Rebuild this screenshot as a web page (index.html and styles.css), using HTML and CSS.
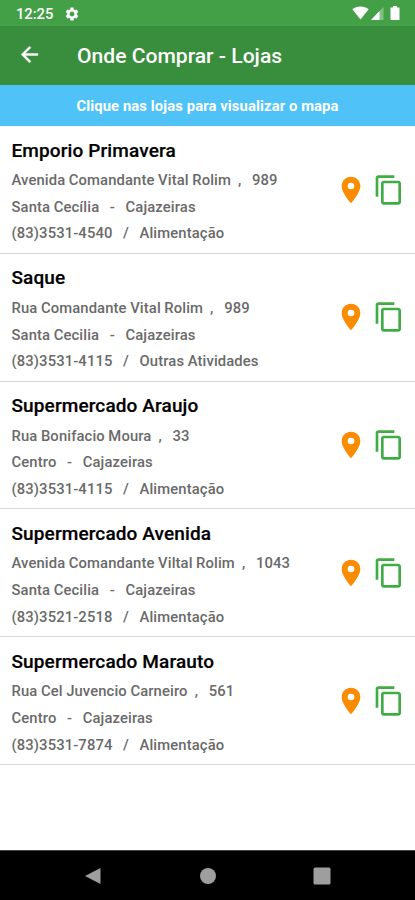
FILE: index.html
```html
<!DOCTYPE html>
<html lang="pt-BR">
<head>
<meta charset="utf-8">
<title>Onde Comprar - Lojas</title>
<link rel="stylesheet" href="styles.css">
</head>
<body>
<svg class="defs" width="0" height="0">
  <symbol id="pin" viewBox="0 0 24 24"><path d="M12 2C8.13 2 5 5.13 5 9c0 5.25 7 13 7 13s7-7.75 7-13c0-3.87-3.13-7-7-7zm0 9.5a2.5 2.5 0 0 1 0-5 2.5 2.5 0 0 1 0 5z"/></symbol>
  <symbol id="copy" viewBox="0 0 24 24"><path d="M16 1H4c-1.1 0-2 .9-2 2v14h2V3h12V1zm3 4H8c-1.1 0-2 .9-2 2v14c0 1.1.9 2 2 2h11c1.1 0 2-.9 2-2V7c0-1.1-.9-2-2-2zm0 16H8V7h11v14z"/></symbol>
</svg>
<div class="status">
  <span class="time">12:25</span>
  <svg class="gear" viewBox="0 0 24 24"><path d="M19.14 12.94c.04-.3.06-.61.06-.94 0-.32-.02-.64-.07-.94l2.03-1.58c.18-.14.23-.41.12-.61l-1.92-3.32c-.12-.22-.37-.29-.59-.22l-2.39.96c-.5-.38-1.03-.7-1.62-.94l-.36-2.54c-.04-.24-.24-.41-.48-.41h-3.84c-.24 0-.43.17-.47.41l-.36 2.54c-.59.24-1.13.57-1.62.94l-2.39-.96c-.22-.08-.47 0-.59.22L2.74 8.87c-.12.21-.08.47.12.61l2.03 1.58c-.05.3-.09.63-.09.94s.02.64.07.94l-2.03 1.58c-.18.14-.23.41-.12.61l1.92 3.32c.12.22.37.29.59.22l2.39-.96c.5.38 1.03.7 1.62.94l.36 2.54c.05.24.24.41.48.41h3.84c.24 0 .44-.17.47-.41l.36-2.54c.59-.24 1.13-.56 1.62-.94l2.39.96c.22.08.47 0 .59-.22l1.92-3.32c.12-.22.07-.47-.12-.61l-2.01-1.58zM12 15.6c-1.98 0-3.6-1.62-3.6-3.6s1.62-3.6 3.6-3.6 3.6 1.62 3.6 3.6-1.62 3.6-3.6 3.6z"/></svg>
  <svg class="signals" viewBox="0 0 50 16"><path d="M.3 3.2C4.8-.3 12.2-.3 16.700 3.200L8.500 13.500z"/><path d="M31.500 1v13H19z" opacity=".35"/><path d="M27.500 5V14H19z"/><path d="M41 0h4v1.500h2.500V14h-9V1.500H41z"/></svg>
</div>
<header class="appbar">
  <svg class="back" viewBox="0 0 24 24"><path d="M20 11H7.830l5.590-5.590L12 4l-8 8 8 8 1.410-1.410L7.830 13H20v-2z"/></svg>
  <h1>Onde Comprar - Lojas</h1>
</header>
<div class="banner">Clique nas lojas para visualizar o mapa</div>
<main class="list">
  <article class="store">
    <div class="info"><h2>Emporio Primavera</h2><p>Avenida Comandante Vital Rolim  ,   989</p><p>Santa Cecília   -   Cajazeiras</p><p>(83)3531-4540   /   Alimentação</p></div>
    <svg class="pin"><use href="#pin"/></svg><svg class="copy"><use href="#copy"/></svg>
  </article>
  <article class="store">
    <div class="info"><h2>Saque</h2><p>Rua Comandante Vital Rolim  ,   989</p><p>Santa Cecilia   -   Cajazeiras</p><p>(83)3531-4115   /   Outras Atividades</p></div>
    <svg class="pin"><use href="#pin"/></svg><svg class="copy"><use href="#copy"/></svg>
  </article>
  <article class="store">
    <div class="info"><h2>Supermercado Araujo</h2><p>Rua Bonifacio Moura  ,   33</p><p>Centro   -   Cajazeiras</p><p>(83)3531-4115   /   Alimentação</p></div>
    <svg class="pin"><use href="#pin"/></svg><svg class="copy"><use href="#copy"/></svg>
  </article>
  <article class="store">
    <div class="info"><h2>Supermercado Avenida</h2><p>Avenida Comandante Viltal Rolim  ,   1043</p><p>Santa Cecilia   -   Cajazeiras</p><p>(83)3521-2518   /   Alimentação</p></div>
    <svg class="pin"><use href="#pin"/></svg><svg class="copy"><use href="#copy"/></svg>
  </article>
  <article class="store">
    <div class="info"><h2>Supermercado Marauto</h2><p>Rua Cel Juvencio Carneiro  ,   561</p><p>Centro   -   Cajazeiras</p><p>(83)3531-7874   /   Alimentação</p></div>
    <svg class="pin"><use href="#pin"/></svg><svg class="copy"><use href="#copy"/></svg>
  </article>
</main>
<nav class="navbar">
  <svg viewBox="0 0 18 18"><path d="M1 9 16.500 1v16z"/></svg>
  <svg viewBox="0 0 18 18"><circle cx="9" cy="9" r="8"/></svg>
  <svg viewBox="0 0 18 18"><rect x=".5" y=".5" width="17" height="17" rx="1.500"/></svg>
</nav>
</body>
</html>
```
FILE: styles.css
```css
* { box-sizing: border-box; margin: 0; padding: 0; }
body {
  width: 415px; height: 900px; overflow: hidden;
  display: flex; flex-direction: column;
  font-family: Roboto, sans-serif; background: #fff;
}
svg { display: block; flex: none; }
.defs { position: absolute; }
.status {
  height: 26px; flex: none; background: #43a047; color: #fff; fill: #fff;
  display: flex; align-items: center; padding: 1px 12.700px 0 16px;
}
.time { font-size: 14.800px; font-weight: 500; letter-spacing: -.05px; width: 48px; }
.gear { width: 16px; height: 16px; }
.signals { width: 50px; height: 16px; margin-left: auto; }
.appbar {
  height: 59px; flex: none; background: #388e3c; color: #fff; fill: #fff;
  display: flex; align-items: center; padding-left: 17px;
}
.back { width: 25px; height: 25px; margin: -2px 35px 0 0; stroke: #fff; stroke-width: .4; }
h1 { font-size: 21.100px; font-weight: 500; line-height: 26px; }
.banner {
  height: 40.500px; flex: none; background: #4fc3f7; color: #fff;
  font-size: 14.800px; font-weight: 700; line-height: 42px; text-align: center;
  letter-spacing: .1px;
}
.list { flex: 1; padding-top: .500px; }
.store {
  height: 127.800px; border-bottom: 1.500px solid #d8d8d8;
  display: flex; padding: 10.500px 10px 0 11.500px;
}
.info { flex: 1; white-space: pre; }
h2 { font-size: 19px; font-weight: 500; line-height: 28px; color: #000; padding-bottom: 2.500px; letter-spacing: .12px; -webkit-text-stroke: .2px #000; }
p { font-size: 14.800px; font-weight: 500; line-height: 26.700px; color: #6a6a6a; letter-spacing: .12px; word-spacing: -.270px; }
.pin, .copy { width: 32px; height: 32px; margin-top: 37px; }
.pin { fill: #fb8c00; margin-right: 6px; }
.copy { fill: #3fad43; }
.navbar {
  height: 50px; flex: none; background: #000; fill: #9e9e9e; border-top: 1px solid #444;
  display: flex; justify-content: space-between; align-items: center; padding: 0 84px;
}
.navbar svg { width: 18px; height: 18px; }
```
